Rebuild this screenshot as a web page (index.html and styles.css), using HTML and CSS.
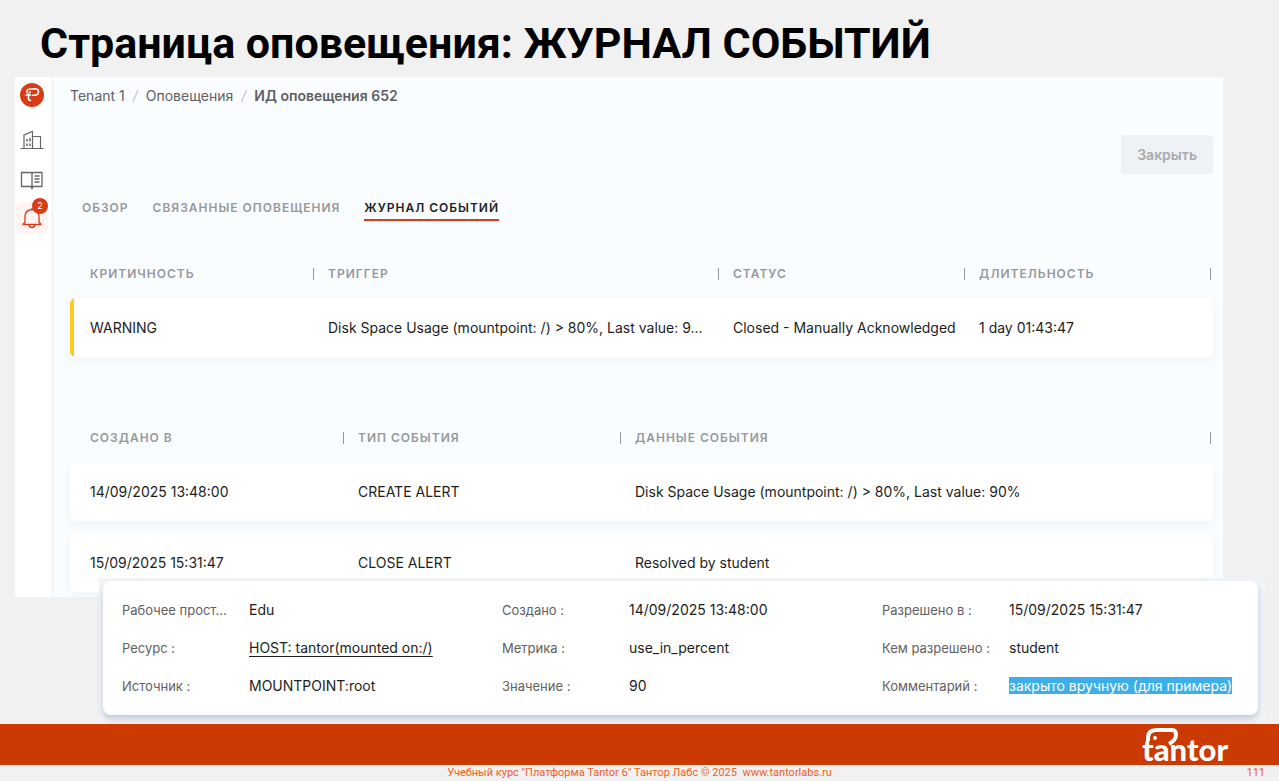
FILE: index.html
```html
<!DOCTYPE html>
<html lang="ru">
<head>
  <meta charset="UTF-8">
  <meta name="viewport" content="width=device-width, initial-scale=1.0">
  <title>Страница оповещения: ЖУРНАЛ СОБЫТИЙ</title>
  <link rel="stylesheet" href="styles.css">
</head>
<body>

<h1>Страница оповещения: ЖУРНАЛ СОБЫТИЙ</h1>

<main>
  <div class="app">
    <!-- Sidebar -->
    <nav class="sidebar">
      <a href="#" class="logo" aria-label="Tantor">
        <svg width="24" height="24" viewBox="0 0 24 24" fill="none">
          <circle cx="12" cy="12" r="12" fill="#d73c16"/>
          <path d="M7 9.500V8Q7 6.500 9 6.200L15 5.800Q18.500 5.800 18.500 8.500Q18.500 12 14.500 12.300H12.500M6 12H10.500M8.500 10.500V15.500Q8.500 17.500 10.500 17.500" stroke="#fff" stroke-width="1.600" stroke-linecap="round"/>
          <circle cx="10" cy="9.200" r="1" fill="#fff"/>
        </svg>
      </a>
      <a href="#" aria-label="Тенанты">
        <svg width="24" height="20" viewBox="0 0 24 20" fill="none" stroke="#666" stroke-width="1.200">
          <path d="M0.500 18.500H23.500M4 18V5L12.500 1.500V18M12.500 6.500H20.500V18M20.500 6.500V18"/>
          <path d="M7 9V11.500M10 8V11.500M7 13.500V16M10 13.500V16" stroke-width="1.500"/>
        </svg>
      </a>
      <a href="#" aria-label="Документация">
        <svg width="24" height="20" viewBox="0 0 24 20" fill="none" stroke="#666" stroke-width="1.300">
          <path d="M1.500 2.500H11L12 3.500L13 2.500H22V16.500H13L12 18.500L11 16.500H1.500ZM12 3.500V18.500"/>
          <path d="M14.500 6H19.500M14.500 9H19.500M14.500 12H19.500" stroke-width="1.600"/>
        </svg>
      </a>
      <a href="#" class="alerts" aria-label="Оповещения">
        <svg width="22" height="22" viewBox="0 0 22 22" fill="none" stroke="#d73c16" stroke-width="1.300" stroke-linejoin="round">
          <path d="M2 17.500L4 15V9Q4.500 3 11 2.500Q17.500 3 18 9V15L20 17.500ZM8 18Q8.500 20.500 11 20.500T14 18M11 2.500V1"/>
        </svg>
        <span class="badge">2</span>
      </a>
    </nav>

    <div class="content">
      <nav class="breadcrumbs">
        <a href="#">Tenant 1</a><i>/</i><a href="#">Оповещения</a><i>/</i><b>ИД оповещения 652</b>
      </nav>

      <div class="actions">
        <button type="button" disabled>Закрыть</button>
      </div>

      <nav class="tabs">
        <a href="#">ОБЗОР</a>
        <a href="#">СВЯЗАННЫЕ ОПОВЕЩЕНИЯ</a>
        <a href="#" class="active">ЖУРНАЛ СОБЫТИЙ</a>
      </nav>

      <table class="alert-table">
        <colgroup><col class="severity"><col class="trigger"><col class="status"><col class="duration"></colgroup>
        <thead>
          <tr><th>КРИТИЧНОСТЬ</th><th>ТРИГГЕР</th><th>СТАТУС</th><th>ДЛИТЕЛЬНОСТЬ</th></tr>
        </thead>
        <tbody>
          <tr class="warning">
            <td>WARNING</td>
            <td>Disk Space Usage (mountpoint: /) &gt; 80%, Last value: 9...</td>
            <td>Closed - Manually Acknowledged</td>
            <td>1 day 01:43:47</td>
          </tr>
        </tbody>
      </table>

      <table class="events-table">
        <colgroup><col class="created"><col class="type"><col class="data"></colgroup>
        <thead>
          <tr><th>СОЗДАНО В</th><th>ТИП СОБЫТИЯ</th><th>ДАННЫЕ СОБЫТИЯ</th></tr>
        </thead>
        <tbody>
          <tr>
            <td>14/09/2025 13:48:00</td>
            <td>CREATE ALERT</td>
            <td>Disk Space Usage (mountpoint: /) &gt; 80%, Last value: 90%</td>
          </tr>
          <tr>
            <td>15/09/2025 15:31:47</td>
            <td>CLOSE ALERT</td>
            <td>Resolved by student</td>
          </tr>
        </tbody>
      </table>
    </div>
  </div>

  <!-- Alert details, lies over the bottom of the app window -->
  <div class="details">
    <div class="details-card">
      <dl>
        <dt>Рабочее прост...</dt><dd>Edu</dd>
        <dt>Ресурс :</dt><dd><a href="#">HOST: tantor(mounted on:/)</a></dd>
        <dt>Источник :</dt><dd>MOUNTPOINT:root</dd>
      </dl>
      <dl>
        <dt>Создано :</dt><dd>14/09/2025 13:48:00</dd>
        <dt>Метрика :</dt><dd>use_in_percent</dd>
        <dt>Значение :</dt><dd>90</dd>
      </dl>
      <dl>
        <dt>Разрешено в :</dt><dd>15/09/2025 15:31:47</dd>
        <dt>Кем разрешено :</dt><dd>student</dd>
        <dt>Комментарий :</dt><dd><mark>закрыто вручную (для примера)</mark></dd>
      </dl>
    </div>
  </div>
</main>

<footer>
  <div class="brand-bar">
    <svg width="90" height="41" viewBox="0 0 90 41" fill="none">
      <path d="M6 17V14Q6 6 14 6H30Q34 6 34 11Q34 16 27 20" stroke="#fff" stroke-width="4"/>
      <circle cx="13" cy="14" r="2" fill="#fff"/>
      <text x="0" y="37" class="brand">tantor</text>
    </svg>
  </div>
  <div class="footnote">
    <span>Учебный курс "Платформа Tantor 6" Тантор Лабс © 2025&nbsp; www.tantorlabs.ru</span>
    <span class="page">111</span>
  </div>
</footer>

</body>
</html>
```
FILE: styles.css
```css
* {
  box-sizing: border-box;
}

body {
  margin: 0;
  min-height: 100vh;
  display: flex;
  flex-direction: column;
  background: #f1f1f1;
  color: #1d1d1d;
  font-family: Inter, "Liberation Sans", sans-serif;
  font-size: 14px;
  line-height: 20px;
}

a {
  color: inherit;
  text-decoration: none;
}

h1 {
  margin: 0;
  padding: 18px 40px 9px;
  font-family: Roboto, sans-serif;
  font-size: 43px;
  line-height: 50px;
  font-weight: 700;
  color: #000;
}

main {
  flex: 1;
}

.app {
  display: flex;
  margin: 0 56px 0 15px;
  background: #fafdff;
}

/* Sidebar */
.sidebar {
  width: 38px;
  padding-top: 6px;
  display: flex;
  flex-direction: column;
  align-items: center;
  background: #fff;
  border-right: 1px solid #eceef3;
}

.sidebar a {
  display: flex;
  align-items: center;
  justify-content: center;
  width: 32px;
  height: 32px;
  margin-bottom: 8px;
  margin-right: 3px;
}

.sidebar .logo {
  height: 24px;
  margin-bottom: 17px;
}

.sidebar .alerts {
  position: relative;
  margin-top: -2px;
  background: #fff4f2;
  border-radius: 6px;
}

.badge {
  position: absolute;
  top: -4px;
  right: 0;
  width: 16px;
  height: 16px;
  border-radius: 50%;
  background: #d73c16;
  color: #fff;
  font-size: 9px;
  line-height: 16px;
  text-align: center;
}

.content {
  flex: 1;
  min-width: 0;
  padding: 9px 10px 5px 17px;
}

.breadcrumbs {
  color: #5f6062;
}

.breadcrumbs i {
  margin: 0 8px;
  color: #c3c5c8;
}

.breadcrumbs b {
  font-weight: 600;
}

.actions {
  display: flex;
  justify-content: flex-end;
  margin-top: 29px;
}

.actions button {
  padding: 0 16px;
  height: 39px;
  border: none;
  border-radius: 3px;
  background: #eef2f5;
  color: #aaabad;
  font: inherit;
  font-weight: 600;
}

.tabs {
  display: flex;
  gap: 24px;
  padding: 24px 12px 0;
  font-size: 12px;
  font-weight: 600;
  letter-spacing: 1px;
  color: #96989b;
}

.tabs a {
  padding-bottom: 1px;
  border-bottom: 2px solid transparent;
}

.tabs .active {
  color: #1d1d1d;
  border-color: #d73c16;
}

/* Tables */
table {
  width: 100%;
  table-layout: fixed;
  border-collapse: separate;
  border-spacing: 0 12px;
}

.alert-table {
  margin-top: 29px;
}

.events-table {
  margin-top: 45px;
  margin-bottom: -12px;
}

.severity { width: 244px; }
.trigger { width: 405px; }
.status { width: 246px; }
.duration { width: 248px; }
.created { width: 274px; }
.type { width: 277px; }
.data { width: 592px; }

th {
  padding: 2px 0;
  padding-left: 14px;
  text-align: left;
  font-size: 12px;
  font-weight: 600;
  letter-spacing: 1px;
  color: #96989b;
  background: linear-gradient(#96989b, #96989b) right center / 1px 12px no-repeat;
}

th:last-child {
  background-position: right 2px center;
}

td {
  height: 59px;
  padding: 0 0 0 14px;
  background: #fff;
  white-space: nowrap;
}

th:first-child,
td:first-child {
  padding-left: 20px;
}

td:first-child {
  border-radius: 6px 0 0 6px;
}

td:last-child {
  border-radius: 0 6px 6px 0;
}

tbody tr {
  border-radius: 6px;
  box-shadow: 0 4px 8px rgba(60, 80, 130, 0.06);
}

.warning td:first-child {
  background: linear-gradient(to right, #ffc91f 4px, #fff 4px);
}

/* Details */
.details {
  position: relative;
  margin: -19px 14px 3px 99px;
  padding: 3px 7px 6px 4px;
  background: #f1f4f9;
}

.details-card {
  display: grid;
  grid-template-columns: 380fr 380fr 357fr;
  padding: 19px;
  background: #fff;
  border-radius: 8px;
  box-shadow: 0 4px 6px rgba(60, 70, 110, 0.25);
}

dl {
  display: grid;
  grid-template-columns: 127px auto;
  justify-content: start;
  row-gap: 18px;
  margin: 0;
}

dt {
  font-size: 13px;
  color: #5f6062;
}

dd {
  margin: 0;
  white-space: nowrap;
}

dd a {
  text-decoration: underline;
  text-underline-offset: 3px;
}

mark {
  background: #3daee9;
  color: #fff;
}

/* Footer */
.brand-bar {
  display: flex;
  justify-content: flex-end;
  height: 41px;
  padding-right: 47px;
  background: #cc3a03;
}

.brand {
  font-family: Lato, sans-serif;
  font-size: 31px;
  font-weight: 900;
  fill: #fff;
}

.footnote {
  display: grid;
  grid-template-columns: 1fr auto 1fr;
  padding: 0 14px;
  font-family: Roboto, sans-serif;
  font-size: 11px;
  line-height: 16px;
  color: #ee6224;
}

.footnote span:first-child {
  grid-column: 2;
}

.page {
  text-align: right;
}
```
